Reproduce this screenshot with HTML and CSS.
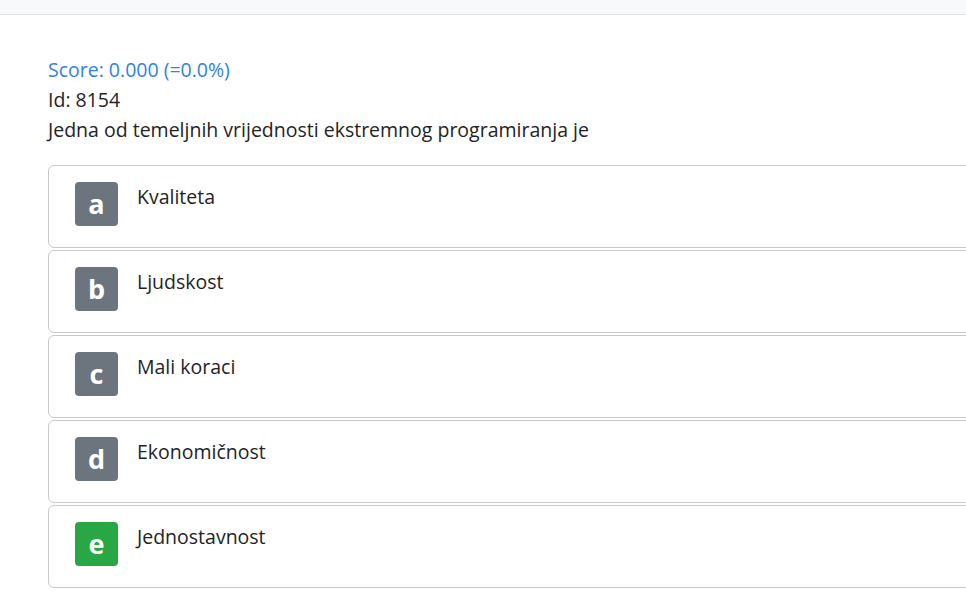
FILE: index.html
```html
<!DOCTYPE html>
<html lang="hr">
<head>
<meta charset="utf-8">
<title>Quiz</title>
<link rel="stylesheet" href="styles.css">
</head>
<body>
<div class="topbar"></div>
<main class="content">
  <div class="score">Score: 0.000 (=0.0%)</div>
  <div class="line">Id: 8154</div>
  <div class="line">Jedna od temeljnih vrijednosti ekstremnog programiranja je</div>
  <ul class="answers">
    <li class="answer"><span class="badge">a</span><span class="text">Kvaliteta</span></li>
    <li class="answer"><span class="badge">b</span><span class="text">Ljudskost</span></li>
    <li class="answer"><span class="badge">c</span><span class="text">Mali koraci</span></li>
    <li class="answer"><span class="badge">d</span><span class="text">Ekonomičnost</span></li>
    <li class="answer"><span class="badge correct">e</span><span class="text">Jednostavnost</span></li>
  </ul>
</main>
</body>
</html>
```
FILE: styles.css
```css
html, body {
  margin: 0;
  padding: 0;
  overflow: hidden;
  background: #ffffff;
}
body {
  font-family: "Open Sans", "Noto Sans", sans-serif;
  font-size: 19.5px;
  color: #1f2326;
}
.topbar {
  height: 14px;
  background: #f8f9fa;
  border-bottom: 1px solid #dee2e6;
}
.content {
  padding: 40px 0 0 48px;
}
.score, .line {
  line-height: 30px;
}
.score {
  color: #3183e0;
}
.answers {
  list-style: none;
  margin: 20px 0 0 0;
  padding: 0;
  width: 1100px;
  display: flex;
  flex-direction: column;
  gap: 2px;
}
.answer {
  display: flex;
  align-items: flex-start;
  gap: 19px;
  padding: 16px 26px 21px 26px;
  border: 1px solid #c9c9c9;
  border-radius: 6px;
}
.badge {
  width: 43px;
  height: 44px;
  flex: none;
  display: flex;
  align-items: center;
  justify-content: center;
  background: #6c757d;
  color: #ffffff;
  border-radius: 4px;
  font-weight: 700;
  font-size: 27px;
  line-height: 1;
  padding-bottom: 2px;
  box-sizing: border-box;
}
.badge.correct {
  background: #28a745;
}
.text {
  line-height: 30px;
}
```
